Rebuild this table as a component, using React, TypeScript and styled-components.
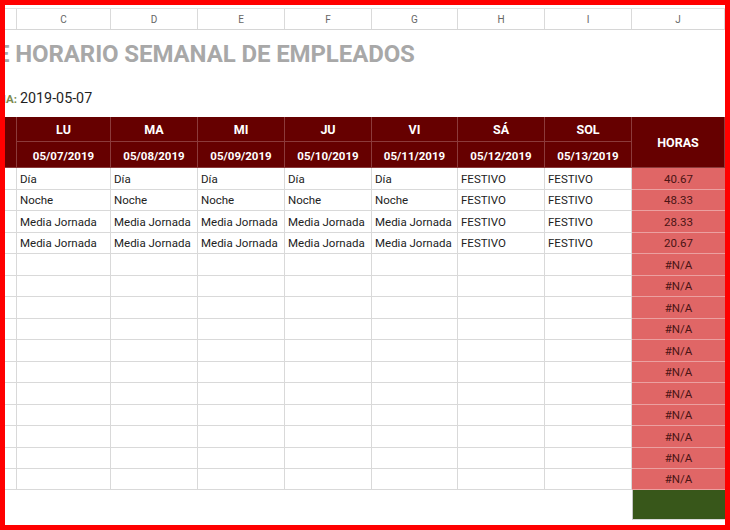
import React from "react";
import styled, { createGlobalStyle } from "styled-components";

const GlobalStyle = createGlobalStyle`
  html, body { margin: 0; padding: 0; background: #ffffff; }
  body { font-family: Roboto, "Liberation Sans", Arial, sans-serif; }
`;

const COLS = "12px 94px 87px 87px 87px 86px 87px 87px 93px";

const Frame = styled.div`
  width: 730px;
  height: 530px;
  box-sizing: border-box;
  border: 5px solid #ff0000;
  background: #ffffff;
  overflow: hidden;
`;

const Sheet = styled.div`
  padding-top: 3px;
`;

const LetterRow = styled.div`
  display: grid;
  grid-template-columns: ${COLS};
  height: 22px;
  box-sizing: border-box;
  border-top: 1px solid #e2e2e2;
  border-bottom: 1px solid #d6d6d6;
  background: #ffffff;
`;

const Letter = styled.div`
  display: flex;
  align-items: center;
  justify-content: center;
  border-right: 1px solid #dadada;
  font-size: 10px;
  color: #666666;
`;

const TitleRow = styled.div`
  height: 48px;
  display: flex;
  align-items: center;
  overflow: hidden;
`;

const Title = styled.div`
  margin-left: -9px;
  font-size: 24px;
  font-weight: 700;
  color: #a8a8a8;
  white-space: nowrap;
  letter-spacing: -0.1px;
`;

const DateRow = styled.div`
  height: 39px;
  display: grid;
  grid-template-columns: 12px 1fr;
  align-items: center;
`;

const DateLabel = styled.div`
  display: flex;
  justify-content: flex-end;
  overflow: hidden;
  font-size: 11.5px;
  font-weight: 700;
  color: #7b8a4e;
  white-space: nowrap;
  padding-top: 2px;
`;

const DateValue = styled.div`
  padding-left: 3px;
  font-size: 14.3px;
  color: #1f1f1f;
`;

const Table = styled.div<{ $rows: string }>`
  display: grid;
  grid-template-columns: ${COLS};
  grid-template-rows: ${(p) => p.$rows};
`;

const HeadCell = styled.div<{ $span?: boolean; $top?: boolean }>`
  background: #660000;
  color: #ffffff;
  font-weight: 700;
  font-size: ${(p) => (p.$top ? "12.5px" : "11.5px")};
  display: flex;
  align-items: center;
  justify-content: center;
  box-sizing: border-box;
  border-right: 1px solid #8c3a3a;
  border-bottom: 1px solid #8c3a3a;
  grid-row: ${(p) => (p.$span ? "span 2" : "auto")};
  padding-top: ${(p) => (p.$top ? "0" : "2px")};
`;

const Cell = styled.div`
  box-sizing: border-box;
  border-right: 1px solid #d9d9d9;
  border-bottom: 1px solid #d9d9d9;
  font-size: 11.5px;
  color: #222222;
  padding-left: 3px;
  display: flex;
  align-items: center;
  white-space: nowrap;
  overflow: hidden;
`;

const HoursCell = styled.div`
  box-sizing: border-box;
  background: #e06666;
  border-bottom: 1px solid #eba0a0;
  font-size: 11.5px;
  color: #4a1414;
  display: flex;
  align-items: center;
  justify-content: center;
`;

const Blank = styled.div``;

const TotalCell = styled.div`
  background: #38571a;
  border-left: 1px solid #c6c6c6;
  border-bottom: 1px solid #d9d9d9;
  box-sizing: border-box;
`;

const letters = ["", "C", "D", "E", "F", "G", "H", "I", "J"];
const days = ["LU", "MA", "MI", "JU", "VI", "SÁ", "SOL"];
const dates = [
  "05/07/2019",
  "05/08/2019",
  "05/09/2019",
  "05/10/2019",
  "05/11/2019",
  "05/12/2019",
  "05/13/2019",
];

const dataRows: { cells: string[]; hours: string }[] = [
  { cells: ["Día", "Día", "Día", "Día", "Día", "FESTIVO", "FESTIVO"], hours: "40.67" },
  { cells: ["Noche", "Noche", "Noche", "Noche", "Noche", "FESTIVO", "FESTIVO"], hours: "48.33" },
  {
    cells: ["Media Jornada", "Media Jornada", "Media Jornada", "Media Jornada", "Media Jornada", "FESTIVO", "FESTIVO"],
    hours: "28.33",
  },
  {
    cells: ["Media Jornada", "Media Jornada", "Media Jornada", "Media Jornada", "Media Jornada", "FESTIVO", "FESTIVO"],
    hours: "20.67",
  },
  ...Array.from({ length: 11 }, () => ({ cells: ["", "", "", "", "", "", ""], hours: "#N/A" })),
];

const rowHeights = dataRows.map((_, i) => (i % 2 === 0 && i < 14 ? 22 : 21));
const rowsTemplate = ["25px", "26px", ...rowHeights.map((h) => `${h}px`), "30px"].join(" ");

export default function App() {
  return (
    <>
      <GlobalStyle />
      <Frame>
        <Sheet>
          <LetterRow>
            {letters.map((l, i) => (
              <Letter key={i}>{l}</Letter>
            ))}
          </LetterRow>
          <TitleRow>
            <Title>E HORARIO SEMANAL DE EMPLEADOS</Title>
          </TitleRow>
          <DateRow>
            <DateLabel>FECHA:</DateLabel>
            <DateValue>2019-05-07</DateValue>
          </DateRow>
          <Table $rows={rowsTemplate}>
            <HeadCell $span />
            {days.map((d) => (
              <HeadCell key={d} $top>
                {d}
              </HeadCell>
            ))}
            <HeadCell $span $top>
              HORAS
            </HeadCell>
            {dates.map((d) => (
              <HeadCell key={d}>{d}</HeadCell>
            ))}
            {dataRows.map((r, i) => (
              <React.Fragment key={i}>
                <Cell />
                {r.cells.map((c, j) => (
                  <Cell key={j}>{c}</Cell>
                ))}
                <HoursCell>{r.hours}</HoursCell>
              </React.Fragment>
            ))}
            {Array.from({ length: 8 }, (_, i) => (
              <Blank key={i} />
            ))}
            <TotalCell />
          </Table>
        </Sheet>
      </Frame>
    </>
  );
}
